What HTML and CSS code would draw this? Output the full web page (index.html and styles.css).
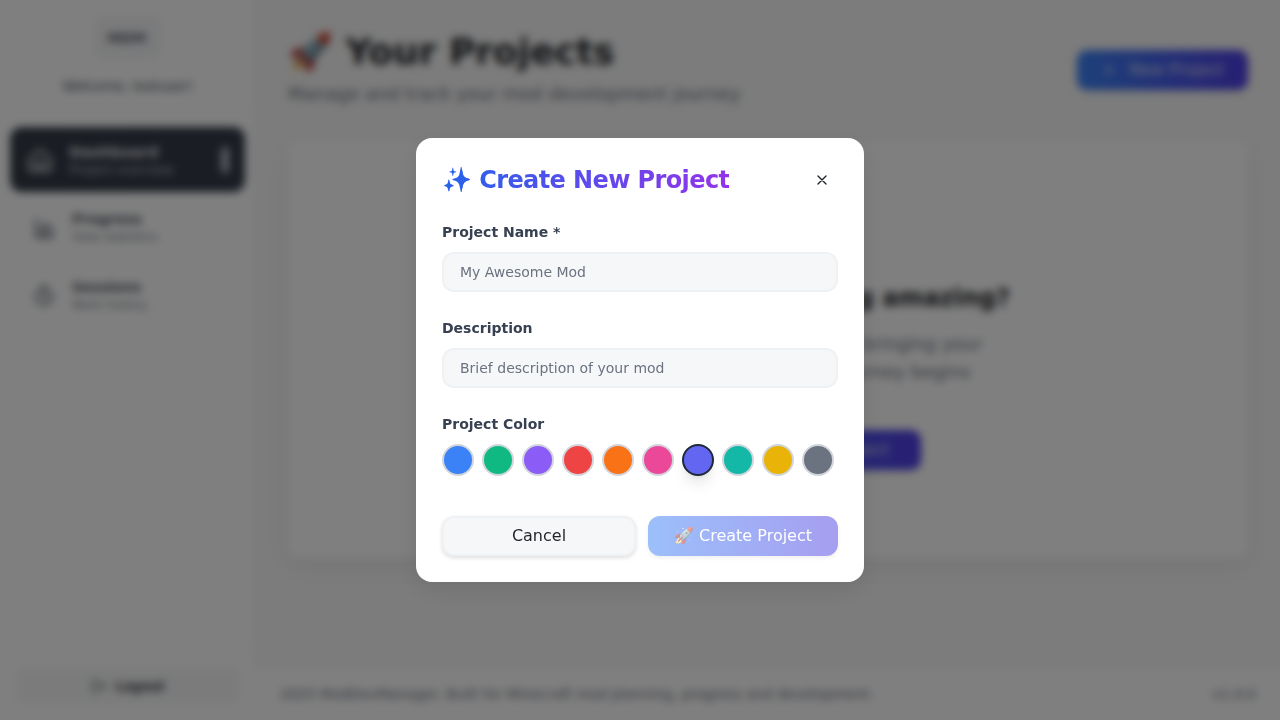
FILE: index.html
```html
<!DOCTYPE html>
<html lang="en">
<head>
<meta charset="utf-8">
<title>Your Projects</title>
<link rel="stylesheet" href="styles.css">
</head>
<body>
<div class="app">
  <aside class="sidebar">
    <div class="brand">
      <div class="logo">MDM</div>
      <div class="welcome">Welcome, testuser!</div>
    </div>
    <nav class="nav">
      <a class="nav-item active">
        <svg class="icon home" viewBox="0 0 24 24"><path d="M3 11l9-8 9 8v9a1 1 0 01-1 1H4a1 1 0 01-1-1zM9 21v-7h6v7"/></svg>
        <span class="nav-text"><b>Dashboard</b><small>Project overview</small></span>
        <span class="marker"></span>
      </a>
      <a class="nav-item">
        <svg class="icon" viewBox="0 0 24 24"><path d="M4 3v18h17M9 13v7M14 7v13M19 10v10M10 10h5"/></svg>
        <span class="nav-text"><b>Progress</b><small>View statistics</small></span>
      </a>
      <a class="nav-item">
        <svg class="icon" viewBox="0 0 24 24"><circle cx="12" cy="13" r="8"/><path d="M12 9v4l2 2M10 2h4"/></svg>
        <span class="nav-text"><b>Sessions</b><small>Work history</small></span>
      </a>
    </nav>
    <div class="side-foot">
      <div class="logout"><svg viewBox="0 0 24 24"><path d="M9 21H5a2 2 0 01-2-2V5a2 2 0 012-2h4M16 17l5-5-5-5M21 12H9"/></svg>Logout</div>
    </div>
  </aside>
  <div class="content">
    <main class="main">
      <header class="page-head">
        <div>
          <h1>🚀 Your Projects</h1>
          <p class="subtitle">Manage and track your mod development journey</p>
        </div>
        <button class="primary new"><svg viewBox="0 0 24 24"><path d="M12 5v14M5 12h14"/></svg>New Project</button>
      </header>
      <section class="empty">
        <h2>Ready to build something amazing?</h2>
        <p>Create your first project and start bringing your<br>mod ideas to life. Your coding journey begins<br>with one click! ✨</p>
        <button class="primary first">🚀 Create Your First Project</button>
      </section>
    </main>
    <footer class="footer"><span>2025 ModDevManager. Built for Minecraft mod planning, progress and development.</span><span>v1.0.0</span></footer>
  </div>
</div>
<div class="overlay">
  <div class="dialog" role="dialog">
    <div class="dialog-head">
      <h3>✨ Create New Project</h3>
      <button class="close" aria-label="Close"><svg viewBox="0 0 24 24"><path d="M18 6L6 18M6 6l12 12"/></svg></button>
    </div>
    <label class="field"><span>Project Name *</span><input placeholder="My Awesome Mod"></label>
    <label class="field"><span>Description</span><input placeholder="Brief description of your mod"></label>
    <div class="colors">
      <span class="label">Project Color</span>
      <div class="swatches">
        <i class="swatch blue"></i><i class="swatch green"></i><i class="swatch violet"></i><i class="swatch red"></i><i class="swatch orange"></i><i class="swatch pink"></i><i class="swatch indigo selected"></i><i class="swatch teal"></i><i class="swatch yellow"></i><i class="swatch gray"></i>
      </div>
    </div>
    <div class="actions">
      <button class="cancel">Cancel</button>
      <button class="create" disabled>🚀 Create Project</button>
    </div>
  </div>
</div>
</body>
</html>
```
FILE: styles.css
```css
* { box-sizing: border-box; margin: 0; padding: 0; }
body { font-family: "DejaVu Sans", sans-serif; font-size: 16px; line-height: 24px; color: #1f2327; height: 720px; overflow: hidden; }
button, input { font: inherit; border: 0; }
svg { fill: none; stroke: currentColor; stroke-width: 2; stroke-linecap: round; stroke-linejoin: round; }
.app { display: flex; height: 720px; background: #f8f8f8; }
.sidebar { width: 256px; display: flex; flex-direction: column; background: #fff; border-right: 1px solid #f3f4f6; box-shadow: 1px 0 3px rgba(0,0,0,.05); }
.brand { height: 113px; padding-top: 16px; display: flex; flex-direction: column; align-items: center; gap: 16px; border-bottom: 1px solid #f3f4f6; }
.logo { width: 67px; height: 43px; border-radius: 8px; background: #f5f6f8; display: grid; place-items: center; font-size: 14px; font-weight: bold; letter-spacing: -.3px; color: #5a626e; padding-right: 2px; }
.welcome { font-size: 14px; line-height: 22px; letter-spacing: -.3px; color: #4b5563; }
.nav { flex: 1; padding: 16px 11px; display: flex; flex-direction: column; gap: 6px; }
.nav-item { height: 62px; padding: 0 21px; border-radius: 10px; display: flex; align-items: center; gap: 16px; color: #4b5563; }
.nav-item.active { height: 63px; margin: -1px 0 0; background: linear-gradient(90deg, #343b45, #343a49); color: #e5e7eb; padding: 0 15px; box-shadow: 0 0 0 1px #343b45; }
.icon { width: 24px; height: 24px; }
.icon.home { width: 28px; height: 28px; }
.nav-item.active .nav-text { margin-left: -1px; }
.nav-text { flex: 1; display: flex; flex-direction: column; }
.nav-text b { font-size: 14px; line-height: 19px; }
.nav-item.active b { font-size: 14.7px; }
.nav-text small { font-size: 12px; line-height: 17px; opacity: .75; }
.nav-item.active small { font-size: 12.7px; }
.marker { width: 8px; height: 26px; border-radius: 4px; background: #b9bdc3; }
.side-foot { height: 69px; padding: 16px; border-top: 1px solid #f3f4f6; }
.logout { height: 36px; border-radius: 8px; background: #f6f7f7; display: flex; align-items: center; justify-content: center; gap: 8px; font-size: 14px; font-weight: bold; letter-spacing: -1px; color: #4d5257; }
.logout svg { width: 16px; height: 16px; }
.content { flex: 1; display: flex; flex-direction: column; }
.main { flex: 1; padding: 32px; }
.page-head { display: flex; justify-content: space-between; align-items: center; height: 76px; margin-bottom: 32px; }
h1 { font-size: 36px; line-height: 40px; white-space: nowrap; }
.subtitle { font-size: 18px; line-height: 28px; margin-top: 8px; color: #6b7280; }
.primary { height: 40px; border-radius: 10px; color: #d8dcec; background: linear-gradient(90deg, #3b82f6, #4f3ee5); display: flex; align-items: center; justify-content: center; gap: 12px; box-shadow: 0 2px 5px rgba(0,0,0,.1); }
.new { width: 171px; }
.new svg { width: 16px; height: 16px; }
.empty { height: 418px; border-radius: 12px; background: #fff; box-shadow: 0 8px 20px rgba(20,50,35,.07); display: flex; flex-direction: column; align-items: center; padding-top: 142px; }
.empty h2 { font-size: 24px; line-height: 32px; }
.empty p { font-size: 18px; line-height: 28px; color: #6b7280; text-align: center; margin-top: 16px; }
.first { width: 306px; margin-top: 16px; padding-right: 32px; justify-content: flex-end; }
.footer { height: 52px; padding: 0 24px 2px; display: flex; align-items: center; justify-content: space-between; background: #fff; border-top: 1px solid #f8f8f8; font-size: 14px; color: #6b7280; }
.overlay { position: absolute; inset: 0; display: grid; place-items: center; background: rgba(0,0,0,.5); backdrop-filter: blur(4px); }
.dialog { width: 448px; height: 444px; padding: 26px; border-radius: 16px; background: #fff; box-shadow: 0 8px 24px rgba(0,0,0,.09); }
.dialog-head { height: 32px; display: flex; align-items: center; justify-content: space-between; }
h3 { font-size: 24px; line-height: 32px; letter-spacing: -.6px; color: transparent; background: linear-gradient(90deg, #2563eb, #9333ea); background-clip: text; -webkit-background-clip: text; }
.close { width: 32px; height: 32px; display: grid; place-items: center; background: none; color: #1f2327; }
.close svg { width: 16px; height: 16px; }
.field { display: block; height: 72px; margin-top: 26px; }
.field span, .label { display: block; font-size: 14px; line-height: 20px; font-weight: bold; color: #374151; }
.field + .field { margin-top: 24px; }
.field input { display: block; width: 396px; height: 40px; margin-top: 10px; padding: 0 16px; border: 2px solid #f0f1f3; border-radius: 12px; background: #f6f7f9; font-size: 14px; }
.field input::placeholder { color: #6b7280; opacity: 1; }
.colors { margin-top: 24px; }
.swatches { display: flex; gap: 8px; margin-top: 10px; }
.swatch { width: 32px; height: 32px; border-radius: 50%; border: 2px solid #d1d5db; }
.selected { border-color: #1f2937; box-shadow: 0 10px 15px -3px rgba(0,0,0,.1), 0 4px 6px -4px rgba(0,0,0,.1); }
.blue { background-color: #3b82f6; }
.green { background-color: #10b981; }
.violet { background-color: #8b5cf6; }
.red { background-color: #ef4444; }
.orange { background-color: #f97316; }
.pink { background-color: #ec4899; }
.indigo { background-color: #6366f1; }
.teal { background-color: #14b8a6; }
.yellow { background-color: #eab308; }
.gray { background-color: #6b7280; }
.actions { display: flex; gap: 12px; margin-top: 40px; }
.actions button { height: 40px; border-radius: 12px; }
.cancel { width: 194px; background: #f6f7f9; border: 2px solid #f0f1f3; color: #1f2327; box-shadow: 0 2px 4px rgba(0,0,0,.13); }
.create { width: 190px; color: #fff; background: linear-gradient(90deg, #3b82f6, #4f40e2); opacity: .5; box-shadow: 0 2px 4px rgba(0,0,0,.13); }
```
